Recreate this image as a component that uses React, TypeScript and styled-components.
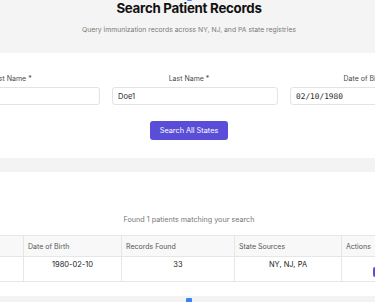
import styled, { createGlobalStyle } from "styled-components";

const GlobalStyle = createGlobalStyle`
  html, body {
    margin: 0;
    padding: 0;
    overflow: hidden;
  }
  body {
    background: #f3f3f3;
    font-family: Inter, "Noto Sans", sans-serif;
    color: #1a1a1a;
  }
`;

const states = "NY, NJ, PA";

function App() {
  return (
    <Page>
      <GlobalStyle />
      <Header>
        <Centered>
          <HeaderIcon />
        </Centered>
        <Title>Search Patient Records</Title>
        <Subtitle>Query immunization records across NY, NJ, and PA state registries</Subtitle>
      </Header>

      <FormSection>
        <FormGrid>
          <Field>
            <Label>First Name *</Label>
            <Input defaultValue="" />
          </Field>
          <Field>
            <Label>Last Name *</Label>
            <Input defaultValue="Doe1" />
          </Field>
          <Field>
            <Label>Date of Birth *</Label>
            <Input $mono defaultValue="02/10/1980" />
          </Field>
        </FormGrid>
        <Centered>
          <PrimaryButton>Search All States</PrimaryButton>
        </Centered>
      </FormSection>

      <Results>
        <Found>Found 1 patients matching your search</Found>
        <Centered>
          <Table>
            <HeadRow>
              <HeadCell>Patient Name</HeadCell>
              <HeadCell>Date of Birth</HeadCell>
              <HeadCell>Records Found</HeadCell>
              <HeadCell>State Sources</HeadCell>
              <HeadCell>Actions</HeadCell>
            </HeadRow>
            <BodyRow>
              <BodyCell>John Doe1</BodyCell>
              <BodyCell>1980-02-10</BodyCell>
              <BodyCell>33</BodyCell>
              <BodyCell>{states}</BodyCell>
              <BodyCell>
                <RowButton>View</RowButton>
              </BodyCell>
            </BodyRow>
          </Table>
        </Centered>
      </Results>

      <Centered>
        <FooterIcon />
      </Centered>
    </Page>
  );
}

export default App;

const Page = styled.div`
  width: 100%;
  min-height: 302px;
  background: #f3f3f3;
`;

const Centered = styled.div`
  display: flex;
  justify-content: center;
  padding-left: 3px;
`;

const Header = styled.header`
  background: #f4f4f4;
  padding-bottom: 18px;
  text-align: center;
`;

const HeaderIcon = styled.div`
  width: 5px;
  height: 12px;
  margin-top: -11px;
  border-radius: 1px;
  background: #3b82f6;
`;

const Title = styled.h1`
  margin: 0;
  padding-left: 3px;
  font-size: 13.3px;
  line-height: 14px;
  font-weight: 700;
  letter-spacing: -0.02em;
  color: #111;
`;

const Subtitle = styled.p`
  margin: 10px 0 0;
  padding-left: 3px;
  font-size: 6.8px;
  line-height: 10px;
  color: #7a7a7a;
`;

const FormSection = styled.section`
  background: #fff;
  padding: 21px 0 18px;
`;

const FormGrid = styled.div`
  display: flex;
  justify-content: center;
  gap: 24px;
  padding-left: 3px;
`;

const Field = styled.div`
  flex: 0 0 154px;
  display: flex;
  flex-direction: column;
  align-items: flex-start;
`;

const Label = styled.label`
  align-self: center;
  font-size: 7px;
  line-height: 9px;
  color: #4a4a4a;
  margin-bottom: 4px;
`;

const Input = styled.input<{ $mono?: boolean }>`
  box-sizing: content-box;
  width: 100%;
  height: 16px;
  padding: 0 5px;
  margin: 0;
  border: 1px solid #e3e3e3;
  border-radius: 3px;
  background: #fff;
  color: #2a2a2a;
  font-family: ${(p) => (p.$mono ? `"DejaVu Sans Mono", monospace` : `Inter, sans-serif`)};
  font-size: ${(p) => (p.$mono ? "7.8px" : "7.5px")};
  outline: none;
`;

const PrimaryButton = styled.button`
  margin-top: 16px;
  width: 78px;
  height: 19px;
  padding: 0;
  border: none;
  border-radius: 3px;
  background: #5a4ed8;
  color: #fff;
  font-family: Inter, sans-serif;
  font-size: 7.3px;
  font-weight: 400;
`;

const Results = styled.section`
  margin-top: 14px;
  background: #fff;
  padding: 43px 0 14px;
`;

const Found = styled.p`
  margin: 0 0 10px;
  padding-left: 3px;
  text-align: center;
  font-size: 7.2px;
  line-height: 10px;
  color: #777;
`;

const Table = styled.div`
  flex: 0 0 auto;
  width: 552px;
  font-size: 7.5px;
`;

const columns = "110px 98px 113px 107px 124px";

const HeadRow = styled.div`
  box-sizing: border-box;
  display: grid;
  grid-template-columns: ${columns};
  height: 22px;
  background: #f8f8f8;
  border-top: 1px solid #e6e6e6;
  border-bottom: 1px solid #e6e6e6;
`;

const HeadCell = styled.div`
  display: flex;
  align-items: center;
  padding-left: 4px;
  border-left: 1px solid #e6e6e6;
  font-size: 7px;
  color: #555;
  white-space: nowrap;
`;

const BodyRow = styled.div`
  box-sizing: border-box;
  display: grid;
  grid-template-columns: ${columns};
  height: 25px;
  border-bottom: 1px solid #e6e6e6;
`;

const BodyCell = styled.div`
  display: flex;
  justify-content: center;
  align-items: flex-start;
  padding-top: 3px;
  border-left: 1px solid #e6e6e6;
  line-height: 10px;
  color: #222;
  white-space: nowrap;
`;

const RowButton = styled.button`
  margin-top: 7px;
  width: 62px;
  height: 10px;
  padding: 0;
  border: none;
  border-radius: 2px;
  background: #5a4ed8;
  color: #fff;
  font-size: 6px;
`;

const FooterIcon = styled.div`
  width: 6px;
  height: 8px;
  margin-top: 2px;
  border-radius: 1px;
  background: #3b82f6;
`;
